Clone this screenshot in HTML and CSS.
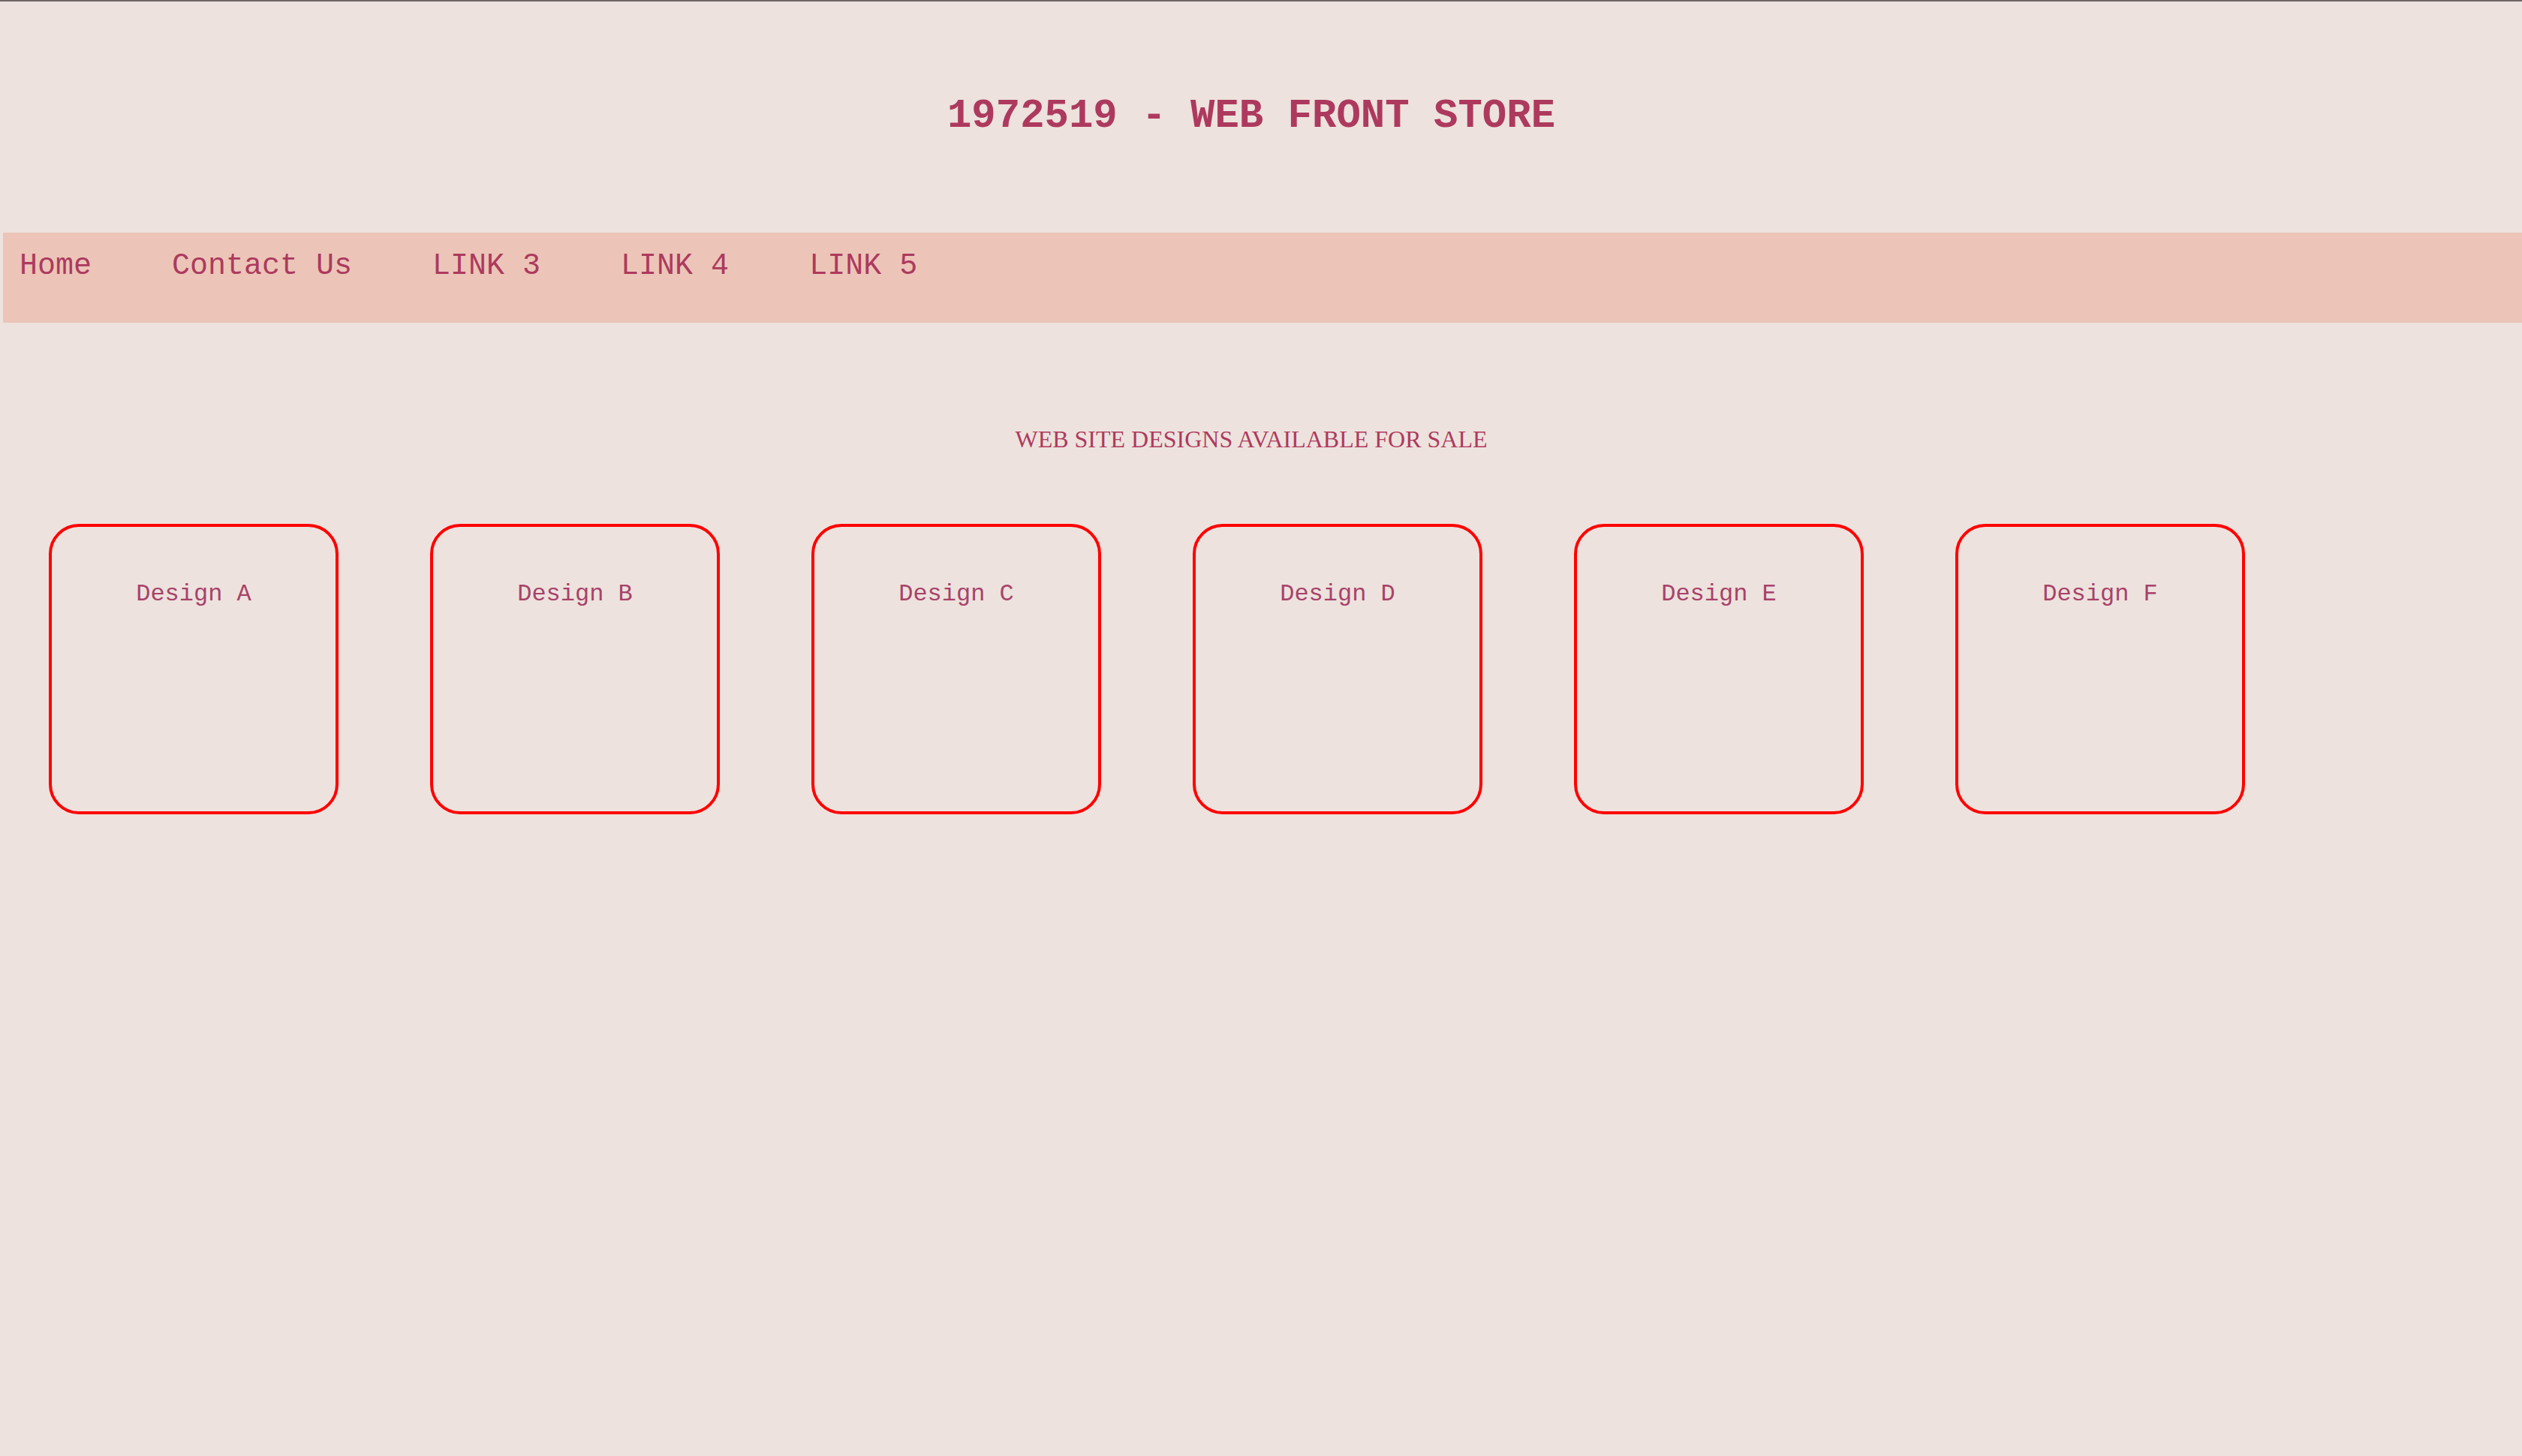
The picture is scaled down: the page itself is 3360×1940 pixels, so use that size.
FILE: index.html
```html
<!DOCTYPE html>
<html lang="en">
<head>
<meta charset="utf-8">
<title>1972519 - WEB FRONT STORE</title>
<link rel="stylesheet" href="styles.css">
</head>
<body>
  <header class="masthead">
    <h1 class="site-title">1972519 - WEB FRONT STORE</h1>
  </header>
  <nav class="main-nav">
    <a class="nav-link" href="#">Home</a>
    <a class="nav-link" href="#">Contact Us</a>
    <a class="nav-link" href="#">LINK 3</a>
    <a class="nav-link" href="#">LINK 4</a>
    <a class="nav-link" href="#">LINK 5</a>
  </nav>
  <main class="content">
    <h2 class="section-title">WEB SITE DESIGNS AVAILABLE FOR SALE</h2>
    <div class="designs">
      <div class="design-card">Design A</div>
      <div class="design-card">Design B</div>
      <div class="design-card">Design C</div>
      <div class="design-card">Design D</div>
      <div class="design-card">Design E</div>
      <div class="design-card">Design F</div>
    </div>
  </main>
</body>
</html>
```
FILE: styles.css
```css
html {
  background: #ede2dd;
}

html, body {
  margin: 0;
  padding: 0;
}

body {
  background: #ede2dd;
  border-top: 2px solid #6e6666;
  color: #ad3a5e;
  font-family: "Courier New", "Nimbus Mono PS", "FreeMono", "Liberation Mono", monospace;
}

.masthead {
  padding: 122px 30px 125px 4px;
  text-align: center;
}

.site-title {
  margin: 0;
  font-family: "Courier New", "Nimbus Mono PS", "FreeMono", "Liberation Mono", monospace;
  font-weight: bold;
  font-size: 54px;
  line-height: 61px;
  color: #ad3a5e;
}

.main-nav {
  margin-left: 4px;
  height: 120px;
  box-sizing: border-box;
  padding: 22px 0 0 22px;
  background: #ecc5b8;
  display: flex;
  align-items: flex-start;
  gap: 107px;
}

.nav-link {
  font-family: "Courier New", "Nimbus Mono PS", "FreeMono", "Liberation Mono", monospace;
  font-size: 40px;
  line-height: 45px;
  color: #ad3a5e;
  text-decoration: none;
}

.content {
  padding-top: 137px;
}

.section-title {
  margin: 0;
  padding: 0 30px 0 4px;
  text-align: center;
  font-family: "Liberation Serif", "Times New Roman", serif;
  font-weight: normal;
  font-size: 32px;
  line-height: 37px;
  color: #ad3a5e;
}

.designs {
  display: flex;
  gap: 122px;
  padding: 94px 0 0 65px;
}

.design-card {
  width: 386px;
  height: 387px;
  box-sizing: border-box;
  border: 4px solid #ff0000;
  border-radius: 40px;
  padding-top: 72px;
  text-align: center;
  font-family: "Courier New", "Nimbus Mono PS", "FreeMono", "Liberation Mono", monospace;
  font-size: 32px;
  line-height: 36px;
  color: #a8426a;
}
```
